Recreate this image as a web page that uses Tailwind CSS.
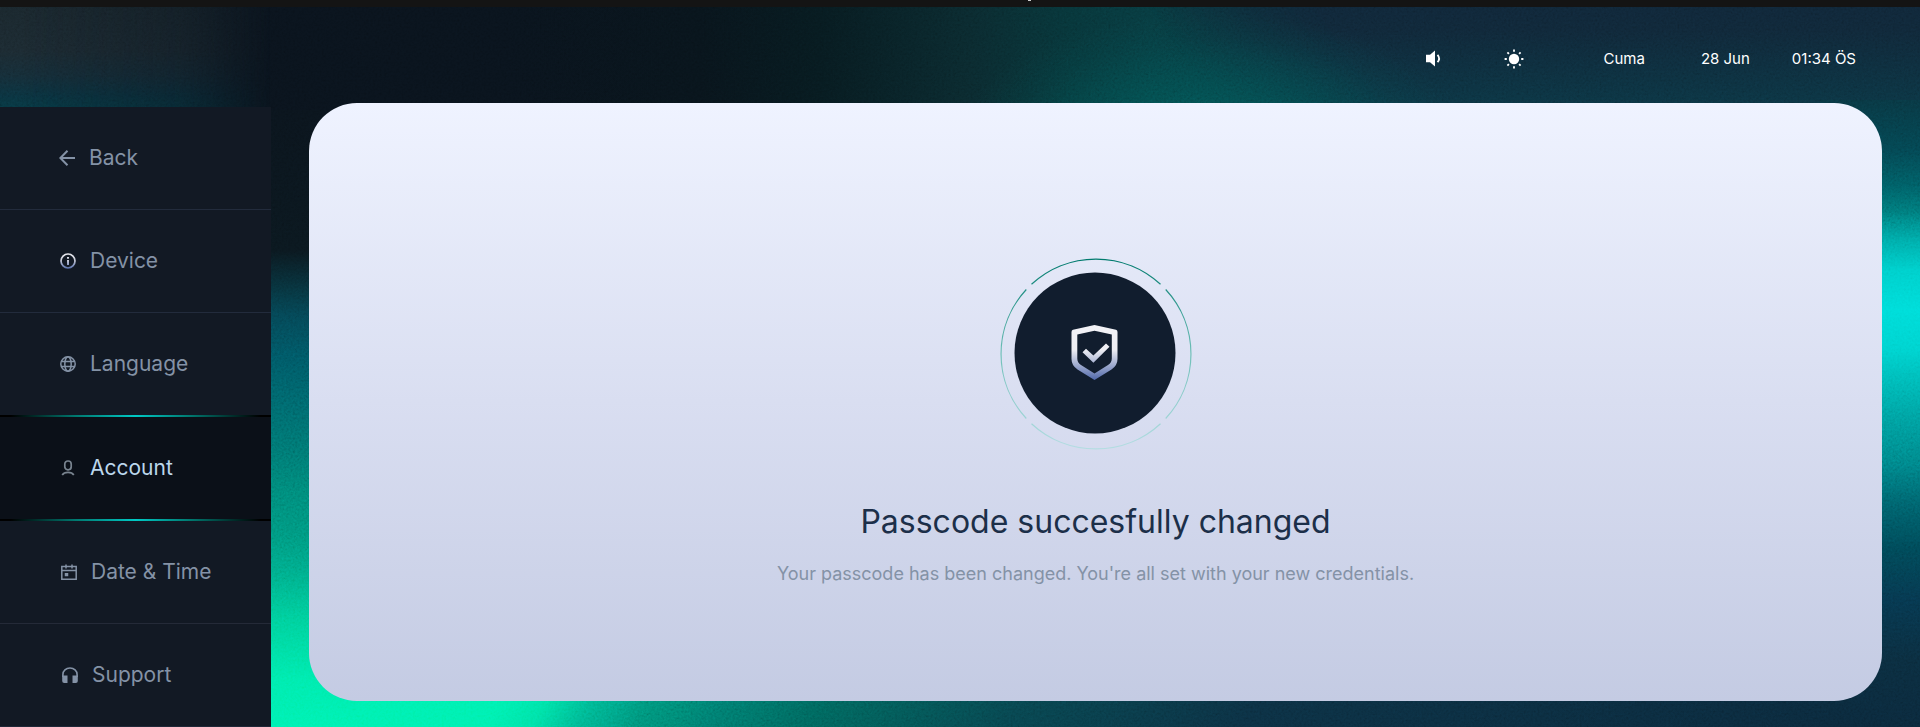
<!DOCTYPE html>
<html lang="en">
<head>
<meta charset="utf-8">
<meta name="viewport" content="width=device-width, initial-scale=1">
<title>Passcode changed</title>
<script src="https://cdn.jsdelivr.net/npm/@tailwindcss/browser@4"></script>
</head>
<body class="relative isolate flex min-h-screen flex-col overflow-x-hidden bg-[#0a2638] font-['Inter',sans-serif]">

  <!-- Aurora backdrop -->
  <div class="absolute inset-0 -z-10 overflow-hidden" aria-hidden="true">
    <div class="absolute inset-x-0 bottom-0 h-40 bg-[linear-gradient(120deg,#00efab_0,#00efab_500px,#00e0a2_540px,#00b38c_580px,#008c74_630px,#00766a_690px,#006058_780px,#07414a_950px,#0b2d3f_1157px,#0a2638_100%)]"></div>
    <div class="absolute inset-x-0 top-0 h-44 bg-[linear-gradient(to_right,#0a121b_0,#09121b_500px,#08131a_700px,#07191e_820px,#0a272c_970px,#073236_1070px,#07373c_1150px,#0a303a_1280px,#0c2534_100%)]"></div>
    <div class="absolute right-0 top-0 h-44 w-[800px] bg-[linear-gradient(to_bottom,#0f2435_0,#0f2535_30px,#0a3441_120px)] [mask-image:linear-gradient(55deg,transparent_120px,black_260px)]"></div>
    <div class="absolute left-[960px] top-[10px] h-52 w-[500px] bg-[radial-gradient(ellipse_at_50%_60%,#005c5acc_0%,#00555488_30%,#00555422_55%,#00555400_70%)]"></div>
    <div class="absolute left-0 top-[110px] bottom-0 w-[357px] bg-[linear-gradient(to_bottom,#0a131b_0,#0a161d_140px,#07303a_178px,#044250_205px,#00525f_245px,#006066_290px,#00706c_340px,#008474_390px,#009078_425px,#00a582_460px,#00cc95_510px,#00eaa8_570px,#00f0ac_100%)]"></div>
    <div class="absolute right-0 top-[100px] bottom-0 w-[100px] bg-[linear-gradient(to_bottom,#08343f_0,#03424d_50px,#00585f_85px,#007374_112px,#00a5a3_140px,#00cbc7_170px,#00dad6_210px,#00cfcb_250px,#00bab7_275px,#009a9a_318px,#007c80_365px,#005c66_405px,#004452_450px,#06344a_500px,#0a2a3b_560px,#0a2638_100%)]"></div>
    <div class="absolute left-0 top-0 h-28 w-[270px] bg-[linear-gradient(to_bottom,#18242a_0,#1a272e_50px,#142a34_75px,#0a2f3b_95px,#06353f_110px)] [mask-image:linear-gradient(to_right,black_20px,#0009_180px,transparent)]"></div>
    <svg class="absolute inset-0 h-full w-full opacity-25 mix-blend-overlay">
      <filter id="grain"><feTurbulence type="fractalNoise" baseFrequency="0.45" numOctaves="2"/><feColorMatrix values=".6 .6 0 0 -.1  .6 .6 0 0 -.1  .6 .6 0 0 -.1  0 0 0 0 1"/></filter>
      <rect width="100%" height="100%" filter="url(#grain)"/>
    </svg>
  </div>

  <div class="relative h-[7px] shrink-0 bg-[#141414]" aria-hidden="true">
    <span class="absolute left-[1028px] top-0 h-px w-[3px] bg-white/80"></span>
  </div>

  <div class="grid flex-1 grid-cols-[271px_minmax(0,1fr)] grid-rows-[96px_minmax(0,1fr)]">
    <header class="col-span-2 flex items-center justify-end pr-16 pt-2 text-[15px] text-white">
      <button type="button" aria-label="Volume" class="mr-[60px]">
        <svg class="h-5 w-5" viewBox="0 0 20 20" fill="currentColor"><path d="M2 5.700h4L11 1.500v16l-5-4.200H2z"/><path d="M13.500 5.800q3.200 3.700 0 7.400" fill="none" stroke="currentColor" stroke-width="1.800"/></svg>
      </button>
      <button type="button" aria-label="Brightness" class="mr-20">
        <svg class="h-5 w-5" viewBox="0 0 20 20" fill="currentColor"><circle cx="10" cy="10" r="5.200"/><g stroke="currentColor" stroke-width="1.800"><path d="M10 .6v2.200M10 17.200v2.200M.6 10h2.200M17.200 10h2.200M3.400 3.400l1.500 1.500M15.100 15.100l1.500 1.500M3.400 16.600l1.500-1.500M15.100 4.900l1.500-1.500"/></g></svg>
      </button>
      <span class="mr-14">Cuma</span>
      <span class="mr-[42px]">28 Jun</span>
      <time datetime="01:34">01:34 ÖS</time>
    </header>

    <nav class="mt-1 flex flex-col bg-[#121924] text-[21px] text-[#8492a6]" aria-label="Settings">
      <button type="button" class="box-content flex flex-1 items-center gap-3.5 border-b border-[#222b3c] pl-[59px]">
        <svg class="h-4 w-4" viewBox="0 0 16 16" fill="none" stroke="currentColor" stroke-width="2"><path d="M16 8H1.500M8.500 .8L1.400 8l7.100 7.200"/></svg>
        Back
      </button>
      <button type="button" class="box-content flex flex-1 items-center gap-3.5 border-b border-[#222b3c] pl-[60px]">
        <svg class="h-4 w-4" viewBox="0 0 16 16" fill="none">
          <linearGradient id="info" x1="0" y1="0" x2="0" y2="16" gradientUnits="userSpaceOnUse"><stop stop-color="#efeff3"/><stop offset=".45" stop-color="#c8cbd8"/><stop offset="1" stop-color="#526baa"/></linearGradient>
          <circle cx="8" cy="8" r="7" stroke="url(#info)" stroke-width="1.700"/><path d="M7 4h2v1.800H7zM7 7h2v5H7z" fill="url(#info)"/>
        </svg>
        Device
      </button>
      <button type="button" class="flex flex-1 items-center gap-3.5 pl-[60px]">
        <svg class="h-4 w-4" viewBox="0 0 16 16" fill="none" stroke="currentColor" stroke-width="1.500"><circle cx="8" cy="8" r="7.200"/><ellipse cx="8" cy="8" rx="3.200" ry="7.200"/><path d="M1.300 5.500h13.400M1.300 10.500h13.400"/></svg>
        Language
      </button>
      <div class="h-0.5 shrink-0 bg-[linear-gradient(to_right,#000_0,#000_4%,#007970_28%,#00c9c5_50%,#007970_70%,#000_96%)]"></div>
      <button type="button" aria-current="page" class="flex flex-1 items-center gap-3.5 bg-[#0b1018] pl-[60px] text-[#bcd7ec]">
        <svg class="h-4 w-4 text-[#79848f]" viewBox="0 0 16 16" fill="none" stroke="currentColor" stroke-width="1.700"><rect x="4.800" y="1" width="6.400" height="8.800" rx="3"/><path d="M2.200 15q1.600-2.600 5.800-2.600t5.800 2.600"/></svg>
        Account
      </button>
      <div class="h-0.5 shrink-0 bg-[linear-gradient(to_right,#000_0,#000_4%,#007970_28%,#00c9c5_50%,#007970_70%,#000_96%)]"></div>
      <button type="button" class="box-content flex flex-1 items-center gap-3.5 border-b border-[#242a38] pl-[61px]">
        <svg class="h-4 w-4" viewBox="0 0 16 16" fill="none" stroke="currentColor" stroke-width="1.500"><path d="M.8 2.500h14.400v12.700H.8zM.8 6.500h14.400M5 .4v4M11 .4v4"/><path d="M4.500 9.800h2v1.700h-2z" fill="currentColor"/></svg>
        Date &amp; Time
      </button>
      <button type="button" class="box-content flex flex-1 items-center gap-3.5 border-b border-[#1f2838] pl-[62px]">
        <svg class="h-4 w-4" viewBox="0 0 16 16" fill="currentColor"><path d="M.9 10V7.500C.9 3.600 4 1 8 1s7.100 2.600 7.100 6.500V10" fill="none" stroke="currentColor" stroke-width="1.600"/><path d="M.2 8.500h5.300V16H2.200q-2 0-2-2zM10.500 8.500h5.300V14q0 2-2 2h-3.300z"/></svg>
        Support
      </button>
    </nav>

    <main class="mb-[26px] ml-[38px] mr-[38px] flex flex-col items-center justify-center rounded-[48px] bg-linear-to-b from-[#eff3ff] via-[#d9def1] to-[#c4cbe3] pt-[42px] text-center">
      <svg class="h-48 w-48" viewBox="-96 -96 192 192" fill="none" aria-hidden="true">
        <linearGradient id="ring" x1="0" y1="-95" x2="0" y2="95" gradientUnits="userSpaceOnUse"><stop stop-color="#007a6d"/><stop offset=".5" stop-color="#6fc0b8"/><stop offset="1" stop-color="#b4dde2"/></linearGradient>
        <linearGradient id="shield" x1="0" y1="-28" x2="0" y2="27" gradientUnits="userSpaceOnUse"><stop stop-color="#f2f2f6"/><stop offset=".45" stop-color="#eeeef3"/><stop offset="1" stop-color="#5169ab"/></linearGradient>
        <g stroke="url(#ring)" stroke-width="1.200">
          <path d="M-64.500 -69.700A95 95 0 0 1 64.500 -69.700M69.700 -64.500A95 95 0 0 1 69.700 64.500M64.500 69.700A95 95 0 0 1 -64.500 69.700M-69.700 64.500A95 95 0 0 1 -69.700 -64.500"/>
        </g>
        <circle cx="-1" cy="-1" r="80.500" fill="#111d2e"/>
        <g transform="translate(-1 -1)">
          <path fill="url(#shield)" fill-rule="evenodd" d="M-.5-28 21-23.200Q22.500-22.800 22.500-21V6Q22.500 12.500 16.500 16.500L-.5 27-17.500 16.500Q-23.500 12.500-23.500 6V-21Q-23.500-22.800-22-23.200zM-.5-22.300-17.700-18.500V5.500Q-17.700 9.500-14 12L-.5 20.600 13 12Q16.800 9.500 16.800 5.500V-18.500z"/>
          <path fill="url(#shield)" d="M-12.500 -.8-9-4.300-1.600 2.600 11-9.600 14.500-6.200-1.600 9.800z"/>
        </g>
      </svg>
      <h1 class="mt-[52px] text-[32px] leading-10 text-[#1c2f49]">Passcode succesfully changed</h1>
      <p class="mt-[18px] text-lg leading-7 text-[#8492a6]">Your passcode has been changed. You're all set with your new credentials.</p>
    </main>
  </div>
</body>
</html>
